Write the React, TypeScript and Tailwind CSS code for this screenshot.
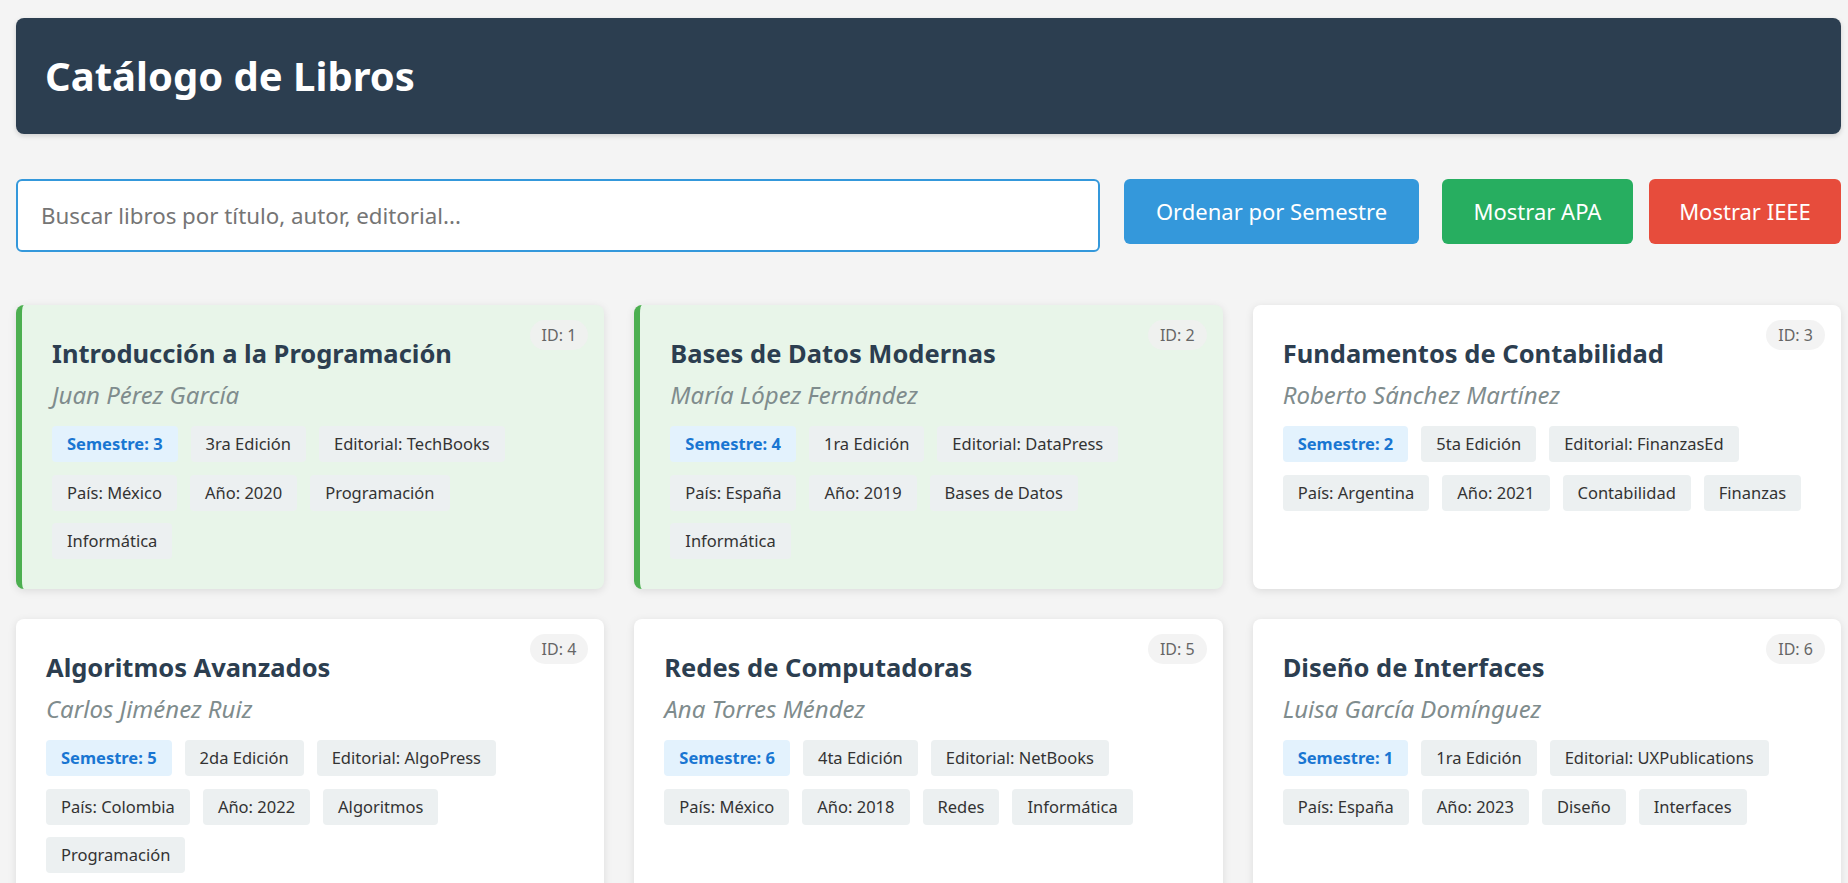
import React from 'react';

interface Book {
    id: number;
    title: string;
    author: string;
    semester: number;
    edition: string;
    publisher: string;
    country: string;
    year: number;
    tags: string[];
    highlight?: boolean;
}

const books: Book[] = [
    { id: 1, title: 'Introducción a la Programación', author: 'Juan Pérez García', semester: 3, edition: '3ra Edición', publisher: 'TechBooks', country: 'México', year: 2020, tags: ['Programación', 'Informática'], highlight: true },
    { id: 2, title: 'Bases de Datos Modernas', author: 'María López Fernández', semester: 4, edition: '1ra Edición', publisher: 'DataPress', country: 'España', year: 2019, tags: ['Bases de Datos', 'Informática'], highlight: true },
    { id: 3, title: 'Fundamentos de Contabilidad', author: 'Roberto Sánchez Martínez', semester: 2, edition: '5ta Edición', publisher: 'FinanzasEd', country: 'Argentina', year: 2021, tags: ['Contabilidad', 'Finanzas'] },
    { id: 4, title: 'Algoritmos Avanzados', author: 'Carlos Jiménez Ruiz', semester: 5, edition: '2da Edición', publisher: 'AlgoPress', country: 'Colombia', year: 2022, tags: ['Algoritmos', 'Programación'] },
    { id: 5, title: 'Redes de Computadoras', author: 'Ana Torres Méndez', semester: 6, edition: '4ta Edición', publisher: 'NetBooks', country: 'México', year: 2018, tags: ['Redes', 'Informática'] },
    { id: 6, title: 'Diseño de Interfaces', author: 'Luisa García Domínguez', semester: 1, edition: '1ra Edición', publisher: 'UXPublications', country: 'España', year: 2023, tags: ['Diseño', 'Interfaces'] },
];

const Tag = ({ children, primary }: { children: React.ReactNode; primary?: boolean }) => (
    <span
        className={`rounded-[4px] px-[15px] py-[7px] text-[16.5px] leading-[22px] whitespace-nowrap ${
            primary ? 'bg-[#e3f2fd] text-[#1976d2] font-bold' : 'bg-[#ecf0f1] text-[#333333]'
        }`}
    >
        {children}
    </span>
);

const BookCard = ({ book }: { book: Book }) => {
    const cardStyle = book.highlight
        ? 'bg-[#e8f5e9] border-l-[6px] border-[#4caf50]'
        : 'bg-white';

    return (
        <div className={`relative rounded-lg p-[30px] shadow-[0_2px_8px_rgba(0,0,0,0.1)] ${cardStyle}`}>
            <span className="absolute top-[15px] right-[16px] h-[30px] px-[12px] flex items-center rounded-full bg-[#f0f0f0]/80 text-[16px] text-[#666666]">
                ID: {book.id}
            </span>
            <h2 className="text-[25.5px] leading-[36px] font-bold text-[#2c3e50] mb-[9px]">{book.title}</h2>
            <p className="text-[24px] leading-[30px] italic text-[#7f8c8d] mb-[16px]">{book.author}</p>
            <div className="flex flex-wrap gap-x-[13px] gap-y-[12.5px]">
                <Tag primary>Semestre: {book.semester}</Tag>
                <Tag>{book.edition}</Tag>
                <Tag>Editorial: {book.publisher}</Tag>
                <Tag>País: {book.country}</Tag>
                <Tag>Año: {book.year}</Tag>
                {book.tags.map((t) => (
                    <Tag key={t}>{t}</Tag>
                ))}
            </div>
        </div>
    );
};

export default function App() {
    return (
        <div className="min-h-screen bg-[#f4f4f4] font-['Noto_Sans',sans-serif]">
            <div className="ml-4 mr-[7px] pt-[18px] pb-8">
                <header className="h-[116px] flex items-center pl-[29px] rounded-lg bg-[#2c3e50] shadow-[0_2px_5px_rgba(0,0,0,0.15)]">
                    <h1 className="text-[40px] font-bold text-white">Catálogo de Libros</h1>
                </header>

                <div className="flex items-start mt-[45px]">
                    <input
                        type="text"
                        placeholder="Buscar libros por título, autor, editorial..."
                        className="flex-1 h-[73px] px-[23px] text-[22.3px] rounded-md border-2 border-[#3498db] bg-white text-[#333] placeholder:text-[#757575] outline-none"
                    />
                    <button className="ml-[24px] w-[295px] h-[65px] rounded-md bg-[#3498db] text-white text-[22px]">
                        Ordenar por Semestre
                    </button>
                    <button className="ml-[23px] w-[191px] h-[65px] rounded-md bg-[#27ae60] text-white text-[22px]">
                        Mostrar APA
                    </button>
                    <button className="ml-[16px] w-[192px] h-[65px] rounded-md bg-[#e74c3c] text-white text-[22px]">
                        Mostrar IEEE
                    </button>
                </div>

                <div className="grid grid-cols-3 gap-[30px] mt-[53px]">
                    {books.map((b) => (
                        <BookCard key={b.id} book={b} />
                    ))}
                </div>
            </div>
        </div>
    );
}
